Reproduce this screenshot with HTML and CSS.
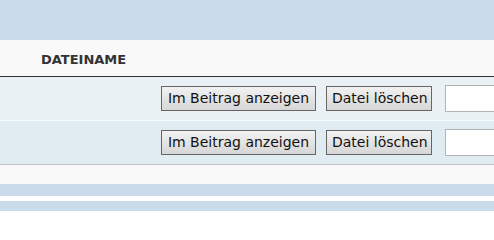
FILE: index.html
```html
<!DOCTYPE html>
<html lang="de">
<head>
<meta charset="utf-8">
<link rel="stylesheet" href="styles.css">
</head>
<body>
<div class="page">
  <div class="topbar"></div>
  <div class="table">
    <div class="head"><span class="th">Dateiname</span></div>
    <div class="row row1">
      <button class="btn btn-wide">Im Beitrag anzeigen</button>
      <button class="btn btn-del">Datei löschen</button>
      <input class="field" type="text">
    </div>
    <div class="row row2">
      <button class="btn btn-wide">Im Beitrag anzeigen</button>
      <button class="btn btn-del">Datei löschen</button>
      <input class="field" type="text">
    </div>
  </div>
  <div class="panel"></div>
  <div class="bar bar-a"></div>
  <div class="gap"></div>
  <div class="bar bar-b"></div>
</div>
</body>
</html>
```
FILE: styles.css
```css
html, body {
  margin: 0;
  padding: 0;
  background: #ffffff;
  overflow: hidden;
}
.page {
  width: 494px;
  height: 212px;
  overflow: hidden;
  font-family: "DejaVu Sans", Verdana, sans-serif;
}
.topbar {
  height: 40px;
  background: #cadceb;
}
.head {
  height: 36px;
  background: #f9f9f9;
  border-bottom: 1px solid #333333;
  display: flex;
  align-items: center;
  padding-left: 41px;
}
.th {
  font-size: 13px;
  font-weight: bold;
  text-transform: uppercase;
  color: #333333;
  padding-top: 2px;
}
.row {
  height: 43px;
  display: flex;
  align-items: center;
  padding-left: 161px;
  white-space: nowrap;
}
.row1 {
  background: #e9f1f5;
  border-bottom: 1px solid #f8fbfc;
}
.row2 {
  background: #e1ebf2;
  border-bottom: 1px solid #bfc8d0;
}
.btn {
  flex: none;
  height: 25px;
  margin: 0;
  padding: 0 5px;
  border: 1px solid #666666;
  background: linear-gradient(#f2f2f2, #d6d6d6);
  font-family: "DejaVu Sans", Verdana, sans-serif;
  font-size: 14px;
  color: #111111;
  line-height: 23px;
}
.btn-wide {
  width: 155px;
}
.btn-del {
  width: 106px;
  margin-left: 10px;
}
.field {
  flex: none;
  width: 150px;
  height: 27px;
  box-sizing: border-box;
  margin: -1px 0 0 13px;
  border: 1px solid #b4b4b4;
  background: #ffffff;
  padding: 0 4px;
}
.panel {
  height: 19px;
  background: #f9f9f9;
}
.bar-a {
  height: 12px;
  background: #cadceb;
}
.gap {
  height: 5px;
  background: #ffffff;
}
.bar-b {
  height: 10px;
  background: #cadceb;
}
```
